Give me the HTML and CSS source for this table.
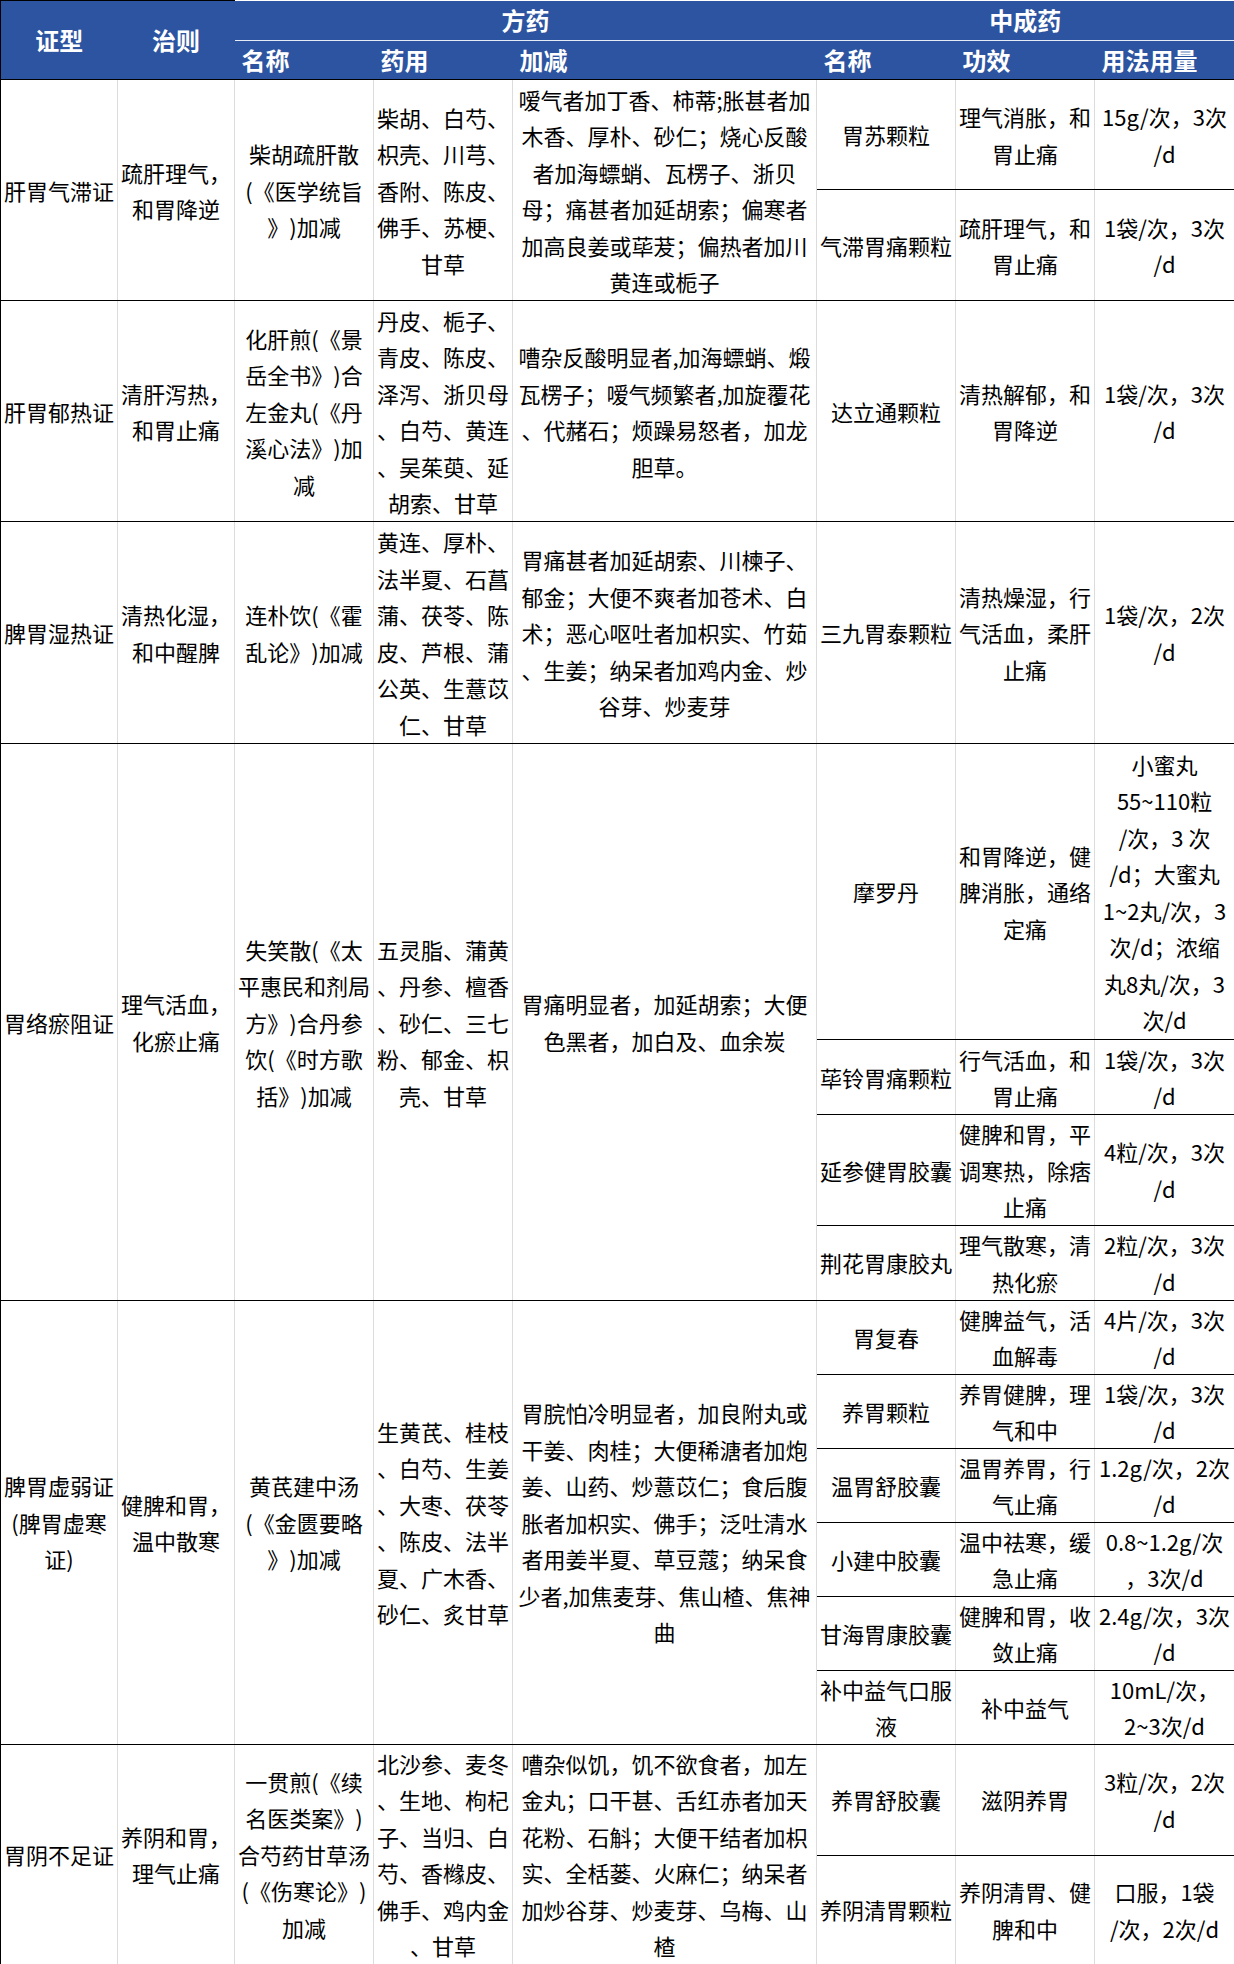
FILE: index.html
```html
<!DOCTYPE html>
<html lang="zh-CN">
<head>
<meta charset="utf-8">
<title>胃痛辨证论治</title>
<link rel="stylesheet" href="styles.css">
</head>
<body>
<table class="tcm">
<colgroup>
<col class="c-zx"><col class="c-zz"><col class="c-mc"><col class="c-yy"><col class="c-jj"><col class="c-zm"><col class="c-gx"><col class="c-yf">
</colgroup>
<thead>
<tr class="hr1">
<th rowspan="2" class="hl hfirst">证型</th>
<th rowspan="2" class="hl">治则</th>
<th colspan="3" class="grp">方药</th>
<th colspan="3" class="grp glast">中成药</th>
</tr>
<tr class="hr2">
<th class="sub">名称</th>
<th class="sub">药用</th>
<th class="sub">加减</th>
<th class="sub">名称</th>
<th class="sub">功效</th>
<th class="sub slast">用法用量</th>
</tr>
</thead>
<tbody>
<!-- 肝胃气滞证 -->
<tr class="r110">
<td rowspan="2" class="first">肝胃气滞证</td>
<td rowspan="2">疏肝理气，<br>和胃降逆</td>
<td rowspan="2">柴胡疏肝散<br>(《医学统旨<br>》)加减</td>
<td rowspan="2">柴胡、白芍、<br>枳壳、川芎、<br>香附、陈皮、<br>佛手、苏梗、<br>甘草</td>
<td rowspan="2">嗳气者加丁香、柿蒂;胀甚者加<br>木香、厚朴、砂仁；烧心反酸<br>者加海螵蛸、瓦楞子、浙贝<br>母；痛甚者加延胡索；偏寒者<br>加高良姜或荜茇；偏热者加川<br>黄连或栀子</td>
<td>胃苏颗粒</td>
<td>理气消胀，和<br>胃止痛</td>
<td class="last">15g/次，3次<br>/d</td>
</tr>
<tr class="r111">
<td>气滞胃痛颗粒</td>
<td>疏肝理气，和<br>胃止痛</td>
<td class="last">1袋/次，3次<br>/d</td>
</tr>
<!-- 肝胃郁热证 -->
<tr class="r221">
<td class="first">肝胃郁热证</td>
<td>清肝泻热，<br>和胃止痛</td>
<td>化肝煎(《景<br>岳全书》)合<br>左金丸(《丹<br>溪心法》)加<br>减</td>
<td>丹皮、栀子、<br>青皮、陈皮、<br>泽泻、浙贝母<br>、白芍、黄连<br>、吴茱萸、延<br>胡索、甘草</td>
<td>嘈杂反酸明显者,加海螵蛸、煅<br>瓦楞子；嗳气频繁者,加旋覆花<br>、代赭石；烦躁易怒者，加龙<br>胆草。</td>
<td>达立通颗粒</td>
<td>清热解郁，和<br>胃降逆</td>
<td class="last">1袋/次，3次<br>/d</td>
</tr>
<!-- 脾胃湿热证 -->
<tr class="r222">
<td class="first">脾胃湿热证</td>
<td>清热化湿，<br>和中醒脾</td>
<td>连朴饮(《霍<br>乱论》)加减</td>
<td>黄连、厚朴、<br>法半夏、石菖<br>蒲、茯苓、陈<br>皮、芦根、蒲<br>公英、生薏苡<br>仁、甘草</td>
<td>胃痛甚者加延胡索、川楝子、<br>郁金；大便不爽者加苍术、白<br>术；恶心呕吐者加枳实、竹茹<br>、生姜；纳呆者加鸡内金、炒<br>谷芽、炒麦芽</td>
<td>三九胃泰颗粒</td>
<td>清热燥湿，行<br>气活血，柔肝<br>止痛</td>
<td class="last">1袋/次，2次<br>/d</td>
</tr>
<!-- 胃络瘀阻证 -->
<tr class="r296">
<td rowspan="4" class="first">胃络瘀阻证</td>
<td rowspan="4">理气活血，<br>化瘀止痛</td>
<td rowspan="4">失笑散(《太<br>平惠民和剂局<br>方》)合丹参<br>饮(《时方歌<br>括》)加减</td>
<td rowspan="4">五灵脂、蒲黄<br>、丹参、檀香<br>、砂仁、三七<br>粉、郁金、枳<br>壳、甘草</td>
<td rowspan="4">胃痛明显者，加延胡索；大便<br>色黑者，加白及、血余炭</td>
<td>摩罗丹</td>
<td>和胃降逆，健<br>脾消胀，通络<br>定痛</td>
<td class="last">小蜜丸<br>55~110粒<br>/次，3 次<br>/d；大蜜丸<br>1~2丸/次，3<br>次/d；浓缩<br>丸8丸/次，3<br>次/d</td>
</tr>
<tr class="r75">
<td>荜铃胃痛颗粒</td>
<td>行气活血，和<br>胃止痛</td>
<td class="last">1袋/次，3次<br>/d</td>
</tr>
<tr class="r110">
<td>延参健胃胶囊</td>
<td>健脾和胃，平<br>调寒热，除痞<br>止痛</td>
<td class="last">4粒/次，3次<br>/d</td>
</tr>
<tr class="r75">
<td>荆花胃康胶丸</td>
<td>理气散寒，清<br>热化瘀</td>
<td class="last">2粒/次，3次<br>/d</td>
</tr>
<!-- 脾胃虚弱证 -->
<tr class="r74">
<td rowspan="6" class="first">脾胃虚弱证<br>(脾胃虚寒<br>证)</td>
<td rowspan="6">健脾和胃，<br>温中散寒</td>
<td rowspan="6">黄芪建中汤<br>(《金匮要略<br>》)加减</td>
<td rowspan="6">生黄芪、桂枝<br>、白芍、生姜<br>、大枣、茯苓<br>、陈皮、法半<br>夏、广木香、<br>砂仁、炙甘草</td>
<td rowspan="6">胃脘怕冷明显者，加良附丸或<br>干姜、肉桂；大便稀溏者加炮<br>姜、山药、炒薏苡仁；食后腹<br>胀者加枳实、佛手；泛吐清水<br>者用姜半夏、草豆蔻；纳呆食<br>少者,加焦麦芽、焦山楂、焦神<br>曲</td>
<td>胃复春</td>
<td>健脾益气，活<br>血解毒</td>
<td class="last">4片/次，3次<br>/d</td>
</tr>
<tr class="r74">
<td>养胃颗粒</td>
<td>养胃健脾，理<br>气和中</td>
<td class="last">1袋/次，3次<br>/d</td>
</tr>
<tr class="r74">
<td>温胃舒胶囊</td>
<td>温胃养胃，行<br>气止痛</td>
<td class="last">1.2g/次，2次<br>/d</td>
</tr>
<tr class="r74">
<td>小建中胶囊</td>
<td>温中祛寒，缓<br>急止痛</td>
<td class="last">0.8~1.2g/次<br>，3次/d</td>
</tr>
<tr class="r74">
<td>甘海胃康胶囊</td>
<td>健脾和胃，收<br>敛止痛</td>
<td class="last">2.4g/次，3次<br>/d</td>
</tr>
<tr class="r74">
<td>补中益气口服<br>液</td>
<td>补中益气</td>
<td class="last">10mL/次，<br>2~3次/d</td>
</tr>
<!-- 胃阴不足证 -->
<tr class="r110">
<td rowspan="2" class="first">胃阴不足证</td>
<td rowspan="2">养阴和胃，<br>理气止痛</td>
<td rowspan="2">一贯煎(《续<br>名医类案》)<br>合芍药甘草汤<br>(《伤寒论》)<br>加减</td>
<td rowspan="2">北沙参、麦冬<br>、生地、枸杞<br>子、当归、白<br>芍、香橼皮、<br>佛手、鸡内金<br>、甘草</td>
<td rowspan="2">嘈杂似饥，饥不欲食者，加左<br>金丸；口干甚、舌红赤者加天<br>花粉、石斛；大便干结者加枳<br>实、全栝蒌、火麻仁；纳呆者<br>加炒谷芽、炒麦芽、乌梅、山<br>楂</td>
<td>养胃舒胶囊</td>
<td>滋阴养胃</td>
<td class="last">3粒/次，2次<br>/d</td>
</tr>
<tr class="r108">
<td>养阴清胃颗粒</td>
<td>养阴清胃、健<br>脾和中</td>
<td class="last">口服，1袋<br>/次，2次/d</td>
</tr>
</tbody>
</table>
</body>
</html>
```

FILE: styles.css
```css
html, body {
  margin: 0;
  padding: 0;
  background: #ffffff;
}

.tcm {
  width: 1234px;
  table-layout: fixed;
  border-collapse: collapse;
  font-family: "Noto Sans CJK SC", "Noto Sans", sans-serif;
  color: #000000;
  text-spacing-trim: space-all;
}

.c-zx { width: 117px; }
.c-zz { width: 117px; }
.c-mc { width: 139px; }
.c-yy { width: 139px; }
.c-jj { width: 304px; }
.c-zm { width: 139px; }
.c-gx { width: 139px; }
.c-yf { width: 140px; }

/* header */
.tcm th {
  background: #2d54a0;
  color: #ffffff;
  font-weight: 700;
  font-size: 24px;
  line-height: 26px;
  padding: 0;
  white-space: nowrap;
  border: 0;
}

.hr1 { height: 40px; }
.hr2 { height: 39px; }

.tcm th.hl {
  text-align: center;
  vertical-align: middle;
  border-top: 1px solid #000000;
  border-bottom: 1px solid #000000;
}

.tcm th.hfirst {
  border-left: 1px solid #000000;
}

.tcm th.grp {
  text-align: center;
  vertical-align: middle;
  border-bottom: 1px solid #e6ebf5;
}

.tcm th.sub {
  text-align: left;
  vertical-align: middle;
  padding-left: 7px;
  border-bottom: 1px solid #000000;
}

.tcm th.glast,
.tcm th.slast {
  border-right: 1px solid #2d54a0;
}

/* body */
.tcm td {
  font-size: 22px;
  line-height: 36.5px;
  padding: 0 3px;
  text-align: center;
  vertical-align: middle;
  white-space: nowrap;
  overflow: visible;
  border-left: 1px solid #dcdcdc;
  border-right: 1px solid #dcdcdc;
  border-top: 1px solid #000000;
  border-bottom: 1px solid #000000;
}

.tcm td.first {
  border-left: 1px solid #000000;
}

.tcm td.last {
  border-right: 1px solid #000000;
}

.r74 { height: 74px; }
.r75 { height: 75px; }
.r108 { height: 108px; }
.r110 { height: 110px; }
.r111 { height: 111px; }
.r221 { height: 221px; }
.r222 { height: 222px; }
.r296 { height: 296px; }
```
